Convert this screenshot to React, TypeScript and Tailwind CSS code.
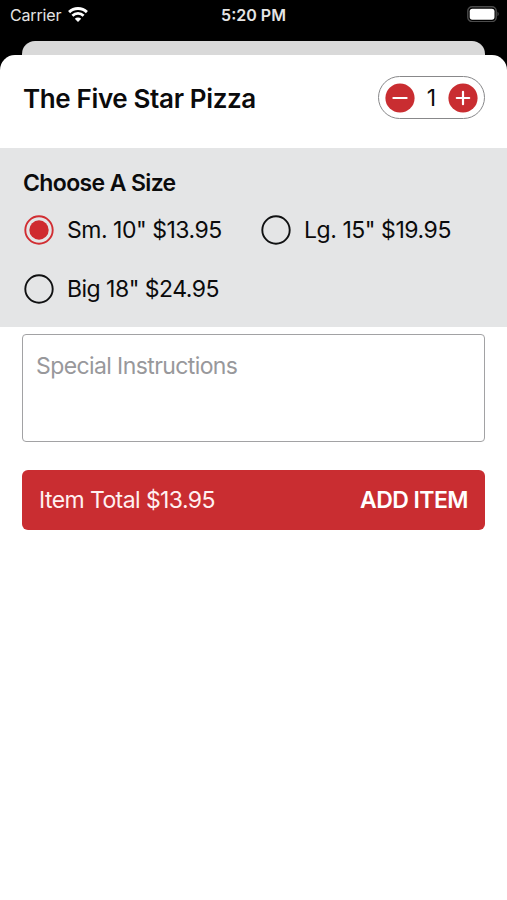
import { useState } from "react";

const sizes = [
  { label: 'Sm. 10" $13.95', total: "$13.95", tracking: "tracking-[-0.49px]" },
  { label: 'Lg. 15" $19.95', total: "$19.95", tracking: "tracking-[-0.45px]" },
  { label: 'Big 18" $24.95', total: "$24.95", tracking: "tracking-[-0.52px]" },
];

function StatusBar() {
  return (
    <div className="grid h-[41px] grid-cols-3 text-[16px] leading-[30px] text-[#e4e4e4]">
      <div className="flex items-start gap-[7px] pl-[10px]">
        <span className="tracking-[-0.15px]">Carrier</span>
        <svg className="mt-[7px] h-[15px] w-5" viewBox="0 0 20 15" fill="none" stroke="#fff">
          <path d="M1.1 5.1a12.8 12.8 0 0 1 17.8 0" strokeWidth="2.9" />
          <path d="M4.4 8.7a8.1 8.1 0 0 1 11.2 0" strokeWidth="2.8" />
          <path d="M10 15 6.8 11.8a4.6 4.6 0 0 1 6.4 0Z" fill="#fff" stroke="none" />
        </svg>
      </div>
      <div className="text-center font-semibold">5:20 PM</div>
      <div className="flex items-start justify-end pr-[8px] pt-[6px]">
        <svg className="h-4 w-8" viewBox="0 0 32 16" fill="none">
          <rect x="0.8" y="0.8" width="28.4" height="14.8" rx="4.3" stroke="#4b4b4b" strokeWidth="1.4" />
          <rect x="2.7" y="2.7" width="24.8" height="11" rx="2.6" fill="#fff" />
          <path d="M30.5 5.8c1.6.7 1.6 3.7 0 4.4Z" fill="#4b4b4b" />
        </svg>
      </div>
    </div>
  );
}

function Stepper({ count, setCount }: { count: number; setCount: (n: number) => void }) {
  return (
    <div className="flex h-[43px] w-[107px] items-center justify-between rounded-full border border-[#88888a] px-[6px]">
      <button aria-label="Decrease quantity" onClick={() => setCount(Math.max(1, count - 1))}>
        <svg className="block size-[30px]" viewBox="0 0 30 30">
          <circle cx="15" cy="15" r="14.6" fill="#c92d31" />
          <path d="M8.4 15h13.2" stroke="#fff" strokeWidth="2.2" strokeLinecap="round" />
        </svg>
      </button>
      <span className="pt-0.5 text-[23px] leading-none">{count}</span>
      <button aria-label="Increase quantity" onClick={() => setCount(count + 1)}>
        <svg className="block size-[30px]" viewBox="0 0 30 30">
          <circle cx="15" cy="15" r="14.6" fill="#c92d31" />
          <path d="M8.8 15h12.4M15 8.8v12.4" stroke="#fff" strokeWidth="2.2" strokeLinecap="round" />
        </svg>
      </button>
    </div>
  );
}

function RadioMark({ on }: { on: boolean }) {
  return (
    <svg className="size-[30px] shrink-0" viewBox="0 0 30 30" fill="none">
      <circle cx="15" cy="15" r="13.7" stroke={on ? "#d12d32" : "#101112"} strokeWidth="1.9" />
      {on && <circle cx="15" cy="15" r="9.7" fill="#cf2a2f" />}
    </svg>
  );
}

export default function App() {
  const [count, setCount] = useState(1);
  const [selected, setSelected] = useState(0);

  return (
    <div className="flex h-[900px] w-[507px] flex-col overflow-hidden bg-black font-['Inter',sans-serif] text-[#0b0b0c]">
      <StatusBar />
      <div className="mx-[22px] h-[14px] shrink-0 rounded-t-[13px] bg-[#d9d9d9]" />
      <main className="flex-1 rounded-t-[15px] bg-white">
        <header className="flex h-[93px] items-start justify-between pl-[23px] pr-[22px] pt-[21px]">
          <h1 className="text-[26px] font-semibold leading-[46px] tracking-[-0.36px] whitespace-nowrap">The Five Star Pizza</h1>
          <Stepper count={count} setCount={setCount} />
        </header>
        <section className="h-[179px] bg-[#e4e5e6] px-[23px] pt-5">
          <h2 className="text-[23px] font-semibold leading-[30px] tracking-[-0.63px]">Choose A Size</h2>
          <div className="mt-[17px] grid grid-cols-[237px_1fr] gap-y-[29px]">
            {sizes.map((s, i) => (
              <button key={s.label} onClick={() => setSelected(i)} className="flex items-center gap-[13px] pl-px text-left">
                <RadioMark on={selected === i} />
                <span className={"whitespace-nowrap text-[23px] leading-[30px] " + s.tracking}>{s.label}</span>
              </button>
            ))}
          </div>
        </section>
        <div className="px-[22px] pt-[7px]">
          <textarea
            placeholder="Special Instructions"
            className="block h-[108px] w-[463px] resize-none rounded-[4px] border-[1.5px] border-[#a2a2a4] bg-white px-[13px] pt-4 text-[23px] leading-[30px] tracking-[-0.6px] outline-none placeholder:text-[#98989b]"
          />
          <button className="mt-7 flex h-[60px] w-[463px] items-center justify-between rounded-[6px] bg-[#c92d31] px-[17px] text-[23px] leading-[30px] text-white">
            <span className="tracking-[-0.58px] text-[#fff0f0]">Item Total {sizes[selected].total}</span>
            <span className="font-semibold tracking-[-0.55px]">ADD ITEM</span>
          </button>
        </div>
      </main>
    </div>
  );
}
